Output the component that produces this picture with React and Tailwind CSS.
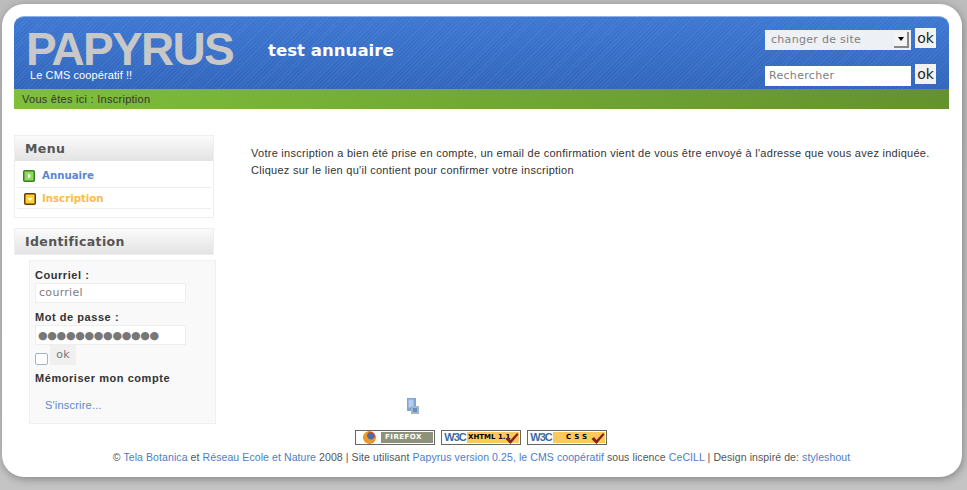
const sans = "font-['Liberation_Sans',Arial,sans-serif]";
const dejavu = "font-['DejaVu_Sans',sans-serif]";
const link = "text-[#4d7cc7]";

function Badge({ left, text, check, w3c }) {
  return (
    <div className="flex h-[15px] w-[80px] shrink-0 border border-[#666] bg-white p-px">
      {w3c ? (
        <div className="flex w-[24px] items-center justify-center font-['Liberation_Sans',sans-serif] text-[11px] font-bold leading-none tracking-[-1px] text-[#3b6aa3]">W3C</div>
      ) : (
        <div className="flex w-[24px] items-center justify-center">
          <svg width="15" height="13" viewBox="0 0 15 13">
            <circle cx="7.5" cy="6.5" r="6.2" fill="#c9501c" />
            <circle cx="8.5" cy="5.5" r="3.6" fill="#4a6cae" />
            <path d="M2 3 Q4 0 8 0.5 Q5 2 5 5 Q6 9 10 8.5 Q12 8 13.5 5 Q14 10 9 12 Q3 13.500 1.500 8 Q1 5 2 3Z" fill="#ee9a26" />
          </svg>
        </div>
      )}
      <div className={`relative flex flex-1 items-center font-['DejaVu_Sans',sans-serif] font-bold leading-none ${w3c ? "bg-[#fdc95c] text-[7px] text-black" : "bg-[#8d937a] text-[7px] text-white"} ${left}`}>
        {text}
        {check && (
          <svg className="absolute right-0 top-0" width="14" height="13" viewBox="0 0 14 13">
            <path d="M0.500 7 L3 5 L5.500 8 L12 1 L13.500 2.500 L5.500 12Z" fill="#8a1f1f" />
          </svg>
        )}
      </div>
    </div>
  );
}

function Ok() {
  return <button className={`flex h-5 w-[21px] items-center justify-center bg-[#f2f2f2] ${dejavu} text-[14px] leading-none text-[#222]`}>ok</button>;
}

function MenuIcon({ border, fill, children }) {
  return (
    <svg width="12" height="12" viewBox="0 0 12 12" className="shrink-0">
      <rect x="0.75" y="0.75" width="10.5" height="10.5" rx="1" fill={fill} stroke={border} strokeWidth="1.5" />
      {children}
    </svg>
  );
}

function BoxTitle({ children }) {
  return (
    <div className={`flex h-[25px] items-center bg-gradient-to-b from-[#fbfbfb] to-[#e3e3e3] pl-[10px] pt-[1px] ${dejavu} text-[12.5px] font-bold tracking-[0.38px] text-[#555]`}>
      {children}
    </div>
  );
}

export default function App() {
  return (
    <div className={`h-[490px] w-[967px] overflow-hidden bg-gradient-to-b from-[#bcbcbc] to-[#c4c4c4] pl-[2px] pt-[4px] ${sans}`}>
      <div className="flex h-[473px] w-[960px] flex-col rounded-[22px] bg-white pl-[12px] pr-[13px] pt-[12px] shadow-[1px_2px_9px_#858585]">
        <header className="flex h-[73px] justify-between rounded-t-[10px] border-t border-t-[#8fb2e6] bg-[#3a74cf] bg-[repeating-linear-gradient(135deg,rgba(255,255,255,0.055)_0px,rgba(255,255,255,0.055)_1px,transparent_1px,transparent_3px),linear-gradient(to_bottom,#3d78d2,#3266bd)]">
          <div className="flex">
            <div className="w-[241px] pl-[12px] pt-[10px]">
              <div className="text-[46px] font-bold leading-[44px] tracking-[-1.7px] text-[#c8c8c8]">PAPYRUS</div>
              <div className="-mt-[2px] pl-[4px] text-[11px] leading-[13px] tracking-[0.1px] text-white">Le CMS coopératif !!</div>
            </div>
            <div className={`pl-[13px] pt-[23px] ${dejavu} text-[16.6px] font-bold leading-[22px] text-white`}>test annuaire</div>
          </div>
          <div className="flex flex-col gap-[14px] pr-[13px] pt-[11px]">
            <div className="flex items-start gap-[4px]">
              <div className={`mt-[2px] flex h-5 w-[146px] items-center justify-between bg-[#edf0f5] pl-[6px] pr-[2px] ${dejavu} text-[11px] tracking-[0.3px] text-[#808080]`}>
                changer de site
                <span className="flex h-[16px] w-[15px] items-center justify-center border-b-2 border-r-2 border-b-[#888] border-r-[#888] bg-[#f4f4f4]">
                  <span className="border-x-[3px] border-t-[4px] border-x-transparent border-t-black" />
                </span>
              </div>
              <Ok />
            </div>
            <div className="flex items-start gap-[4px]">
              <div className={`mt-[2px] flex h-5 w-[146px] items-center bg-white pl-[4px] ${dejavu} text-[11px] tracking-[0.3px] text-[#808080]`}>Rechercher</div>
              <Ok />
            </div>
          </div>
        </header>
        <div className="flex h-[20px] items-center bg-gradient-to-r from-[#7fbf3a] to-[#64922e] pl-[8px] text-[11px] tracking-[0.27px] text-[#333]">Vous êtes ici : Inscription</div>

        <div className="flex flex-1">
          <aside className="w-[202px] shrink-0 pt-[26px]">
            <section className="h-[83px] w-[200px] border border-[#eee]">
              <BoxTitle>Menu</BoxTitle>
              <ul className={`px-[2px] pt-[2px] ${dejavu} text-[10.2px] font-bold`}>
                <li className="flex h-[25px] items-center gap-[7px] border-b border-[#eee] pl-[6px] pt-[2px] text-[#5b86d3]">
                  <MenuIcon border="#3c7a2a" fill="#8fdc5a"><path d="M5 3.500 L8 6 L5 8.500Z" fill="#fff" /></MenuIcon>
                  Annuaire
                </li>
                <li className="flex h-[21px] items-center gap-[6px] border-b border-[#eee] pl-[7px] pt-[1px] text-[#fdb94f]">
                  <MenuIcon border="#6b3d00" fill="#ffd23a"><path d="M3.500 5 L8.500 5 L6 8Z" fill="#fff" /></MenuIcon>
                  Inscription
                </li>
              </ul>
            </section>
            <section className="mt-[10px] w-[200px] border border-[#eee]">
              <BoxTitle>Identification</BoxTitle>
            </section>
            <div className={`ml-[15px] mt-[5px] h-[164px] w-[187px] border border-[#f0f0f0] bg-[#f9f9f9] pl-[5px] pt-[8px] ${sans} text-[11px] text-[#333]`}>
              <div className="font-bold leading-[13px] tracking-[0.55px]">Courriel :</div>
              <div className={`mt-[1px] flex h-5 w-[151px] items-center border border-[#eee] bg-white pl-[3px] pt-[1px] ${dejavu} text-[11px] tracking-[0.3px] text-[#808080]`}>courriel</div>
              <div className="mt-[8px] font-bold leading-[13px] tracking-[0.55px]">Mot de passe :</div>
              <div className={`mt-[1px] flex h-5 w-[151px] items-center border border-[#eee] bg-white pl-[2px] ${dejavu} text-[11px] leading-none tracking-[-0.3px] text-[#777]`}>●●●●●●●●●●●●●</div>
              <div className="flex items-end">
                <span className="h-[12px] w-[13px] rounded-[2px] border border-[#a5b0c0] bg-white" />
                <span className={`ml-[2px] flex h-5 w-[26px] items-center justify-center bg-[#f0f0f0] ${dejavu} text-[11px] tracking-[0.3px] text-[#777]`}>ok</span>
              </div>
              <div className="mt-[7px] font-bold leading-[13px] tracking-[0.55px]">Mémoriser mon compte</div>
              <div className="mt-[14px] pl-[10px] leading-[13px] tracking-[0.2px] text-[#5b86d3]">S'inscrire...</div>
            </div>
          </aside>

          <main className="flex flex-1 flex-col pl-[35px] pt-[36px] text-[11px] leading-[17px] tracking-[0.27px] text-[#333]">
            <p>Votre inscription a bien été prise en compte, un email de confirmation vient de vous être envoyé à l'adresse que vous avez indiquée.</p>
            <p>Cliquez sur le lien qu'il contient pour confirmer votre inscription</p>
            <div className="ml-[156px] mt-[219px]">
              <svg width="12" height="16" viewBox="0 0 12 16">
                <rect x="0" y="0" width="9" height="13" fill="#7ea7d8" />
                <rect x="1.500" y="1.500" width="5" height="8" fill="#b4cfee" />
                <rect x="4" y="8" width="8" height="8" fill="#a9b4bd" />
                <rect x="6" y="10" width="4" height="4" fill="#5f8fc7" />
              </svg>
            </div>
          </main>
        </div>

        <footer className="flex h-[50px] shrink-0 flex-col items-center pt-[3px]">
          <div className="flex gap-[6px] pr-[1px]">
            <Badge left="pl-[4px] tracking-[0.5px]" text="FIREFOX" />
            <Badge left="pl-[1px]" text="XHTML 1.1" check w3c />
            <Badge left="pl-[13px] tracking-[3px]" text="CSS" check w3c />
          </div>
          <div className="mt-[5px] text-[10.5px] leading-[14px] tracking-[0.09px] text-[#555]">
            © <span className={link}>Tela Botanica</span> et <span className={link}>Réseau Ecole et Nature</span> 2008 | Site utilisant <span className={link}>Papyrus version 0.25, le CMS coopératif</span> sous licence <span className={link}>CeCILL</span> | Design inspiré de: <span className={link}>styleshout</span>
          </div>
        </footer>
      </div>
    </div>
  );
}
